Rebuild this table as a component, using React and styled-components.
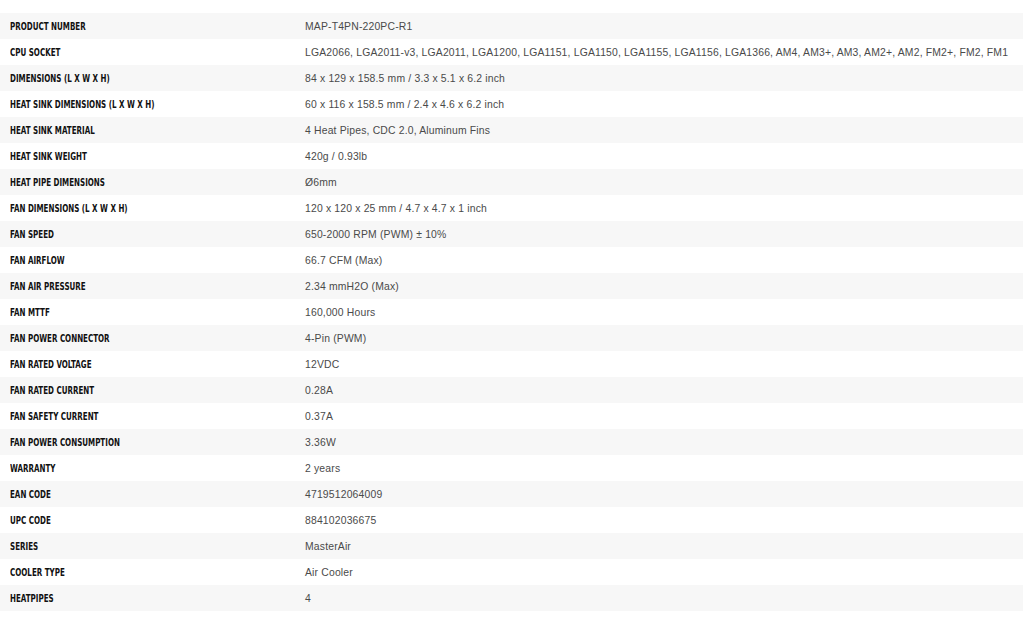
import styled, { createGlobalStyle } from 'styled-components'

const GlobalStyle = createGlobalStyle`
    html, body {
        margin: 0;
        padding: 0;
        background: #ffffff;
    }
`

const SpecTable = styled.section`
    padding-top: 13px;
    width: 100%;
    display: flex;
    flex-direction: column;
`

const SpecRow = styled.div`
    display: grid;
    grid-template-columns: 305px 1fr;
    align-items: center;
    height: 26px;
    background: ${props => (props.$shaded ? '#f7f7f7' : '#ffffff')};
`

const SpecLabel = styled.div`
    padding: 2px 0 0 10px;
    white-space: nowrap;
    display: flex;
    align-items: center;
`

// condensed display face: no narrow font installed, so squeeze DejaVu Condensed
const LabelText = styled.span`
    display: block;
    line-height: 12px;
    font-family: "DejaVu Sans Condensed", "Liberation Sans", sans-serif;
    font-weight: 700;
    font-size: 11px;
    text-transform: uppercase;
    color: #111111;
    transform: scaleX(0.72);
    transform-origin: left center;
`

const SpecValue = styled.div`
    font-family: "Liberation Sans", Arial, sans-serif;
    font-size: 10.4px;
    letter-spacing: 0.17px;
    color: #4a4a4a;
    white-space: nowrap;
`

const specs = [
    ['Product Number', 'MAP-T4PN-220PC-R1'],
    ['CPU Socket', 'LGA2066, LGA2011-v3, LGA2011, LGA1200, LGA1151, LGA1150, LGA1155, LGA1156, LGA1366, AM4, AM3+, AM3, AM2+, AM2, FM2+, FM2, FM1'],
    ['Dimensions (L x W x H)', '84 x 129 x 158.5 mm / 3.3 x 5.1 x 6.2 inch'],
    ['Heat Sink Dimensions (L x W x H)', '60 x 116 x 158.5 mm / 2.4 x 4.6 x 6.2 inch'],
    ['Heat Sink Material', '4 Heat Pipes, CDC 2.0, Aluminum Fins'],
    ['Heat Sink Weight', '420g / 0.93lb'],
    ['Heat Pipe Dimensions', 'Ø6mm'],
    ['Fan Dimensions (L x W x H)', '120 x 120 x 25 mm / 4.7 x 4.7 x 1 inch'],
    ['Fan Speed', '650-2000 RPM (PWM) ± 10%'],
    ['Fan Airflow', '66.7 CFM (Max)'],
    ['Fan Air Pressure', '2.34 mmH2O (Max)'],
    ['Fan MTTF', '160,000 Hours'],
    ['Fan Power Connector', '4-Pin (PWM)'],
    ['Fan Rated Voltage', '12VDC'],
    ['Fan Rated Current', '0.28A'],
    ['Fan Safety Current', '0.37A'],
    ['Fan Power Consumption', '3.36W'],
    ['Warranty', '2 years'],
    ['EAN Code', '4719512064009'],
    ['UPC Code', '884102036675'],
    ['Series', 'MasterAir'],
    ['Cooler Type', 'Air Cooler'],
    ['Heatpipes', '4'],
]

function App() {
    return (
        <>
            <GlobalStyle />
            <SpecTable>
                {specs.map(([label, value], i) => (
                    <SpecRow key={label} $shaded={i % 2 === 0}>
                        <SpecLabel>
                            <LabelText>{label}</LabelText>
                        </SpecLabel>
                        <SpecValue>{value}</SpecValue>
                    </SpecRow>
                ))}
            </SpecTable>
        </>
    )
}

export default App
